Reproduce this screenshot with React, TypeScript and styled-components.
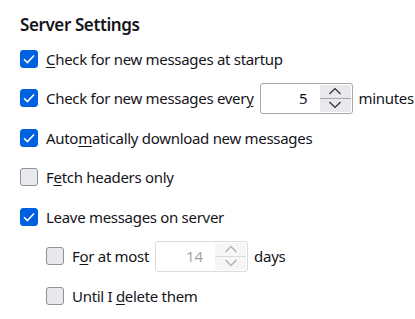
import React from "react";
import styled, { createGlobalStyle } from "styled-components";

const GlobalStyle = createGlobalStyle`
  html, body {
    margin: 0;
    padding: 0;
    background: #fff;
  }
  body {
    font-family: "Noto Sans", "Open Sans", sans-serif;
    color: #15141a;
  }
`;

interface CheckboxProps {
  checked?: boolean;
}

const Checkbox = ({ checked }: CheckboxProps) => (
  <Box $checked={checked}>
    {checked && (
      <svg width="14" height="14" viewBox="0 0 14 14">
        <path d="M2 7.2 L5.4 10.6 L12 3.6" fill="none" stroke="#fff" strokeWidth="1.5" />
      </svg>
    )}
  </Box>
);

interface SpinProps {
  value: number;
  disabled?: boolean;
}

const Spinner = ({ value, disabled }: SpinProps) => (
  <SpinBox $disabled={disabled}>
    <SpinValue>{value}</SpinValue>
    <SpinButtons>
      <SpinButton>
        <svg width="14" height="8" viewBox="0 0 14 8">
          <path d="M1.5 7 L7 1.5 L12.5 7" fill="none" stroke="#2b2b2b" strokeWidth="1.2" />
        </svg>
      </SpinButton>
      <SpinButton $bottom>
        <svg width="14" height="8" viewBox="0 0 14 8">
          <path d="M1.5 1 L7 6.5 L12.5 1" fill="none" stroke="#2b2b2b" strokeWidth="1.2" />
        </svg>
      </SpinButton>
    </SpinButtons>
  </SpinBox>
);

const App = () => (
  <>
    <GlobalStyle />
    <Panel>
      <Title>Server Settings</Title>
      <Options>
        <Row>
          <Checkbox checked />
          <Label>
            <u>C</u>heck for new messages at startup
          </Label>
        </Row>
        <Row>
          <Checkbox checked />
          <Label>
            Check for new messages ever<u>y</u>
          </Label>
          <Spinner value={5} />
          <Label>minutes</Label>
        </Row>
        <Row>
          <Checkbox checked />
          <Label>
            Auto<u>m</u>atically download new messages
          </Label>
        </Row>
        <Row>
          <Checkbox />
          <Label>
            F<u>e</u>tch headers only
          </Label>
        </Row>
        <Row>
          <Checkbox checked />
          <Label>
            Leave messa<u>g</u>es on server
          </Label>
        </Row>
        <Row $indent>
          <Checkbox />
          <Label>
            F<u>o</u>r at most
          </Label>
          <Spinner value={14} disabled />
          <Label>days</Label>
        </Row>
        <Row $indent>
          <Checkbox />
          <Label>
            Until I <u>d</u>elete them
          </Label>
        </Row>
      </Options>
    </Panel>
  </>
);

const Panel = styled.div`
  padding: 13px 0 0 20px;
`;

const Title = styled.h2`
  margin: 0;
  font-size: 17px;
  font-weight: 600;
  line-height: 24px;
  letter-spacing: -0.4px;
`;

const Options = styled.div`
  display: flex;
  flex-direction: column;
  gap: 8.5px;
  margin-top: 6px;
`;

const Row = styled.div<{ $indent?: boolean }>`
  display: flex;
  align-items: center;
  gap: 8px;
  height: 31px;
  padding-left: ${(p) => (p.$indent ? "26px" : "0")};
`;

const Box = styled.span<{ $checked?: boolean }>`
  box-sizing: border-box;
  width: 18px;
  height: 18px;
  flex: none;
  display: flex;
  align-items: center;
  justify-content: center;
  border-radius: 3px;
  background: ${(p) => (p.$checked ? "#0061e0" : "#e9e9ed")};
  border: 1px solid ${(p) => (p.$checked ? "#0061e0" : "#8f8f9d")};
`;

const Label = styled.span`
  font-size: 15px;
  letter-spacing: -0.3px;
  white-space: nowrap;

  u {
    text-underline-offset: 2px;
  }
`;

const SpinBox = styled.div<{ $disabled?: boolean }>`
  box-sizing: border-box;
  display: flex;
  width: 93px;
  height: 31px;
  margin: 0 -2px;
  border: 1px solid #a8a8a8;
  border-radius: 3px;
  background: #fff;
  opacity: ${(p) => (p.$disabled ? 0.4 : 1)};
`;

const SpinValue = styled.div`
  flex: 1;
  display: flex;
  align-items: center;
  justify-content: flex-end;
  padding-right: 12px;
  font-size: 15px;
`;

const SpinButtons = styled.div`
  display: flex;
  flex-direction: column;
  width: 31px;
  margin: 1px 1px 1px 0;
`;

const SpinButton = styled.div<{ $bottom?: boolean }>`
  flex: 1;
  display: flex;
  align-items: center;
  justify-content: center;
  background: #e9e9ed;
  border-top: ${(p) => (p.$bottom ? "1px solid #a8a8a8" : "none")};
  border-radius: ${(p) => (p.$bottom ? "0 0 2px 0" : "0 2px 0 0")};
`;

export default App;
